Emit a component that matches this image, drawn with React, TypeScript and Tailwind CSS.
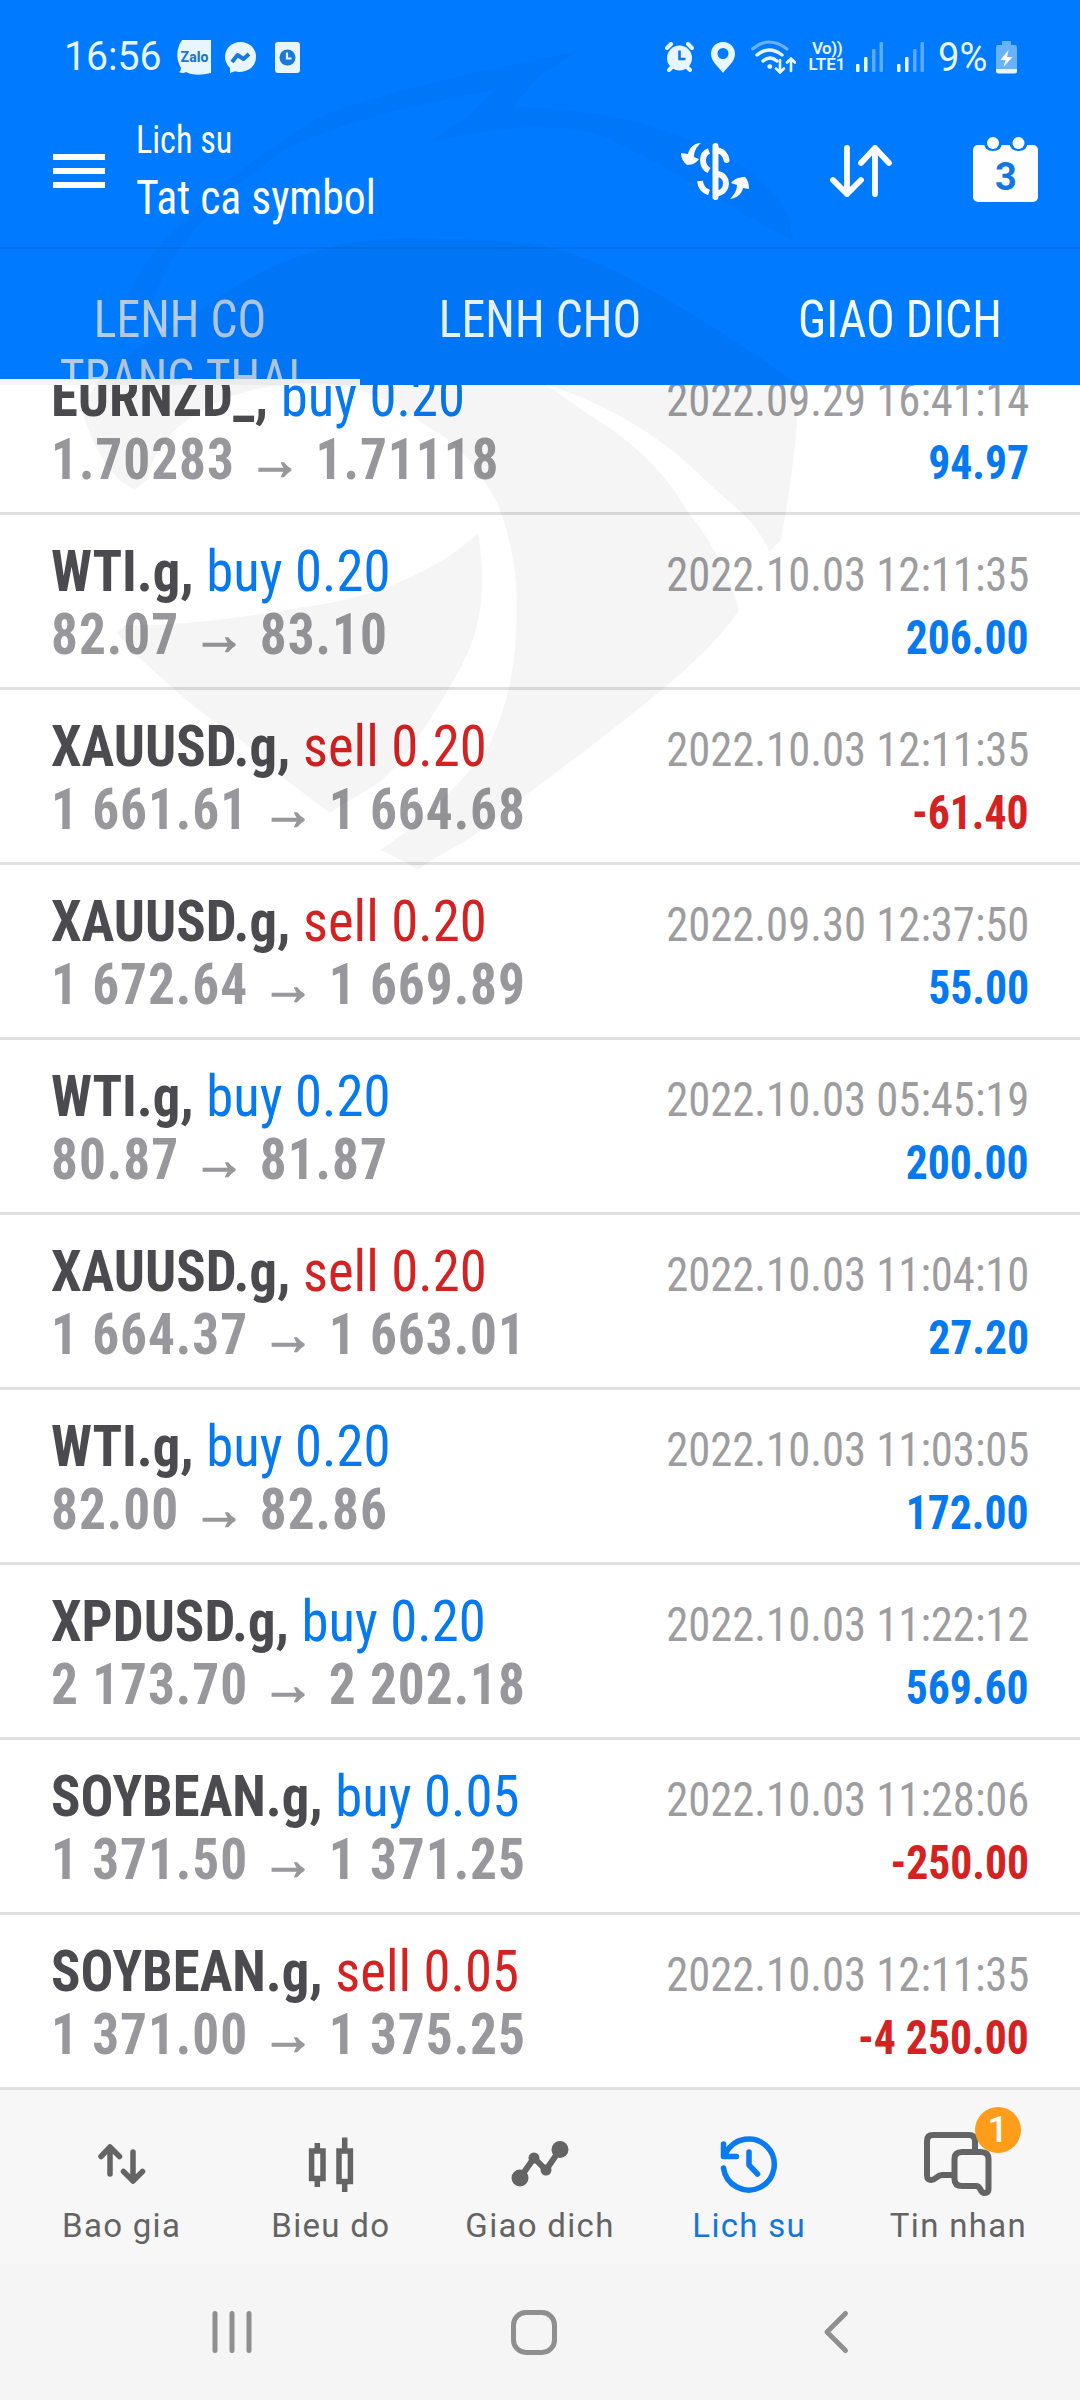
const deals = [
  { symbol: "EURNZD_", side: "buy", volume: "0.20", open: "1.70283", close: "1.71118", time: "2022.09.29 16:41:14", profit: "94.97" },
  { symbol: "WTI.g", side: "buy", volume: "0.20", open: "82.07", close: "83.10", time: "2022.10.03 12:11:35", profit: "206.00" },
  { symbol: "XAUUSD.g", side: "sell", volume: "0.20", open: "1 661.61", close: "1 664.68", time: "2022.10.03 12:11:35", profit: "-61.40" },
  { symbol: "XAUUSD.g", side: "sell", volume: "0.20", open: "1 672.64", close: "1 669.89", time: "2022.09.30 12:37:50", profit: "55.00" },
  { symbol: "WTI.g", side: "buy", volume: "0.20", open: "80.87", close: "81.87", time: "2022.10.03 05:45:19", profit: "200.00" },
  { symbol: "XAUUSD.g", side: "sell", volume: "0.20", open: "1 664.37", close: "1 663.01", time: "2022.10.03 11:04:10", profit: "27.20" },
  { symbol: "WTI.g", side: "buy", volume: "0.20", open: "82.00", close: "82.86", time: "2022.10.03 11:03:05", profit: "172.00" },
  { symbol: "XPDUSD.g", side: "buy", volume: "0.20", open: "2 173.70", close: "2 202.18", time: "2022.10.03 11:22:12", profit: "569.60" },
  { symbol: "SOYBEAN.g", side: "buy", volume: "0.05", open: "1 371.50", close: "1 371.25", time: "2022.10.03 11:28:06", profit: "-250.00" },
  { symbol: "SOYBEAN.g", side: "sell", volume: "0.05", open: "1 371.00", close: "1 375.25", time: "2022.10.03 12:11:35", profit: "-4 250.00" },
];

type Deal = (typeof deals)[number];

function Signal({ className }: { className: string }) {
  return (
    <svg className={className} width="27" height="30" viewBox="0 0 27 30" fill="#e8f6ff">
      <rect x="0" y="22" width="3.5" height="8" rx="1" />
      <rect x="8" y="15" width="3.5" height="15" rx="1" />
      <rect x="16" y="7" width="3.5" height="23" rx="1" opacity=".4" />
      <rect x="23.5" y="0" width="3.5" height="30" rx="1" opacity=".4" />
    </svg>
  );
}

function StatusBar() {
  return (
    <div className="flex h-[114px] items-center pl-[64px] pr-[64px] text-[#e8f6ff]">
      <span className="w-[113px] origin-left scale-x-[0.98] text-[40px] leading-none">16:56</span>

      {/* Zalo */}
      <svg width="34" height="35" viewBox="0 0 34 35">
        <path d="M5 0H34V33Q18 37 9 32Q6 34 2 32Q4 31 4 28Q-4 14 5 0Z" fill="#e8f6ff" />
        <text x="17.5" y="22" textAnchor="middle" fontSize="14" fontWeight="800" fontFamily="Roboto" fill="#2277cc" textLength="28">Zalo</text>
      </svg>

      {/* Messenger */}
      <svg className="ml-[14px]" width="31" height="31" viewBox="0 0 31 31">
        <path d="M15.5 0C6.5 0 0 6.5 0 15C0 19.5 2 23 5 26V31L10 29.2C20 32 31 26 31 15C31 6.5 24.5 0 15.5 0Z" fill="#e8f6ff" />
        <path d="M7 20L12.5 13L18.5 17L24 12" fill="none" stroke="#1b78d8" strokeWidth="4" strokeLinejoin="round" />
      </svg>

      <svg className="ml-[19px]" width="25" height="31" viewBox="0 0 25 31">
        <rect width="25" height="31" rx="3" fill="#e8f6ff" />
        <circle cx="12.5" cy="15.5" r="8" fill="#1b78d8" />
        <path d="M12 10.5V16.5H16.5" fill="none" stroke="#e8f6ff" strokeWidth="2.2" />
      </svg>

      <svg className="ml-auto" width="29" height="30" viewBox="0 0 29 30">
        <circle cx="14.5" cy="16" r="12.5" fill="#e8f6ff" />
        <path d="M2 6L6 2M27 6L23 2M4 28L8 24M25 28L21 24" stroke="#e8f6ff" strokeWidth="4" strokeLinecap="round" />
        <path d="M14.5 8.5V17H20.5" fill="none" stroke="#1178e6" strokeWidth="2.6" />
      </svg>
      <svg className="ml-[17px]" width="24" height="31" viewBox="0 0 24 31">
        <path d="M12 0C5 0 0 5 0 12C0 20 8 25 12 31C16 25 24 20 24 12C24 5 19 0 12 0ZM12 6A5.5 5.5 0 0 1 12 17A5.5 5.5 0 0 1 12 6Z" fill="#e8f6ff" />
      </svg>
      <svg className="ml-[16px]" width="45" height="34" viewBox="0 0 45 34" fill="none" stroke="#e8f6ff" strokeLinecap="round">
        <path d="M1.5 9Q18 -5 36 9" strokeWidth="3" opacity=".45" />
        <path d="M6 15Q18 5 31 15M12 21Q19 15 26 21" strokeWidth="3.4" />
        <path d="M18.5 26.5h.5" strokeWidth="4.5" />
        <path d="M29 20V32M25 28.5L29 32.5L33 28.5M40 31V19M36 22.5L40 18.5L44 22.5" strokeWidth="2.6" />
      </svg>
      <div className="ml-[12px] flex w-[38px] flex-col items-center text-[17px] font-semibold leading-[17px]">
        <span className="whitespace-nowrap leading-[15px] tracking-[-0.5px]">Vo))</span>
        <span>LTE1</span>
      </div>
      <Signal className="ml-[10px]" />
      <Signal className="ml-[14px]" />
      <span className="ml-[14px] w-[58px] origin-left scale-x-[0.93] text-[41px] leading-none">9%</span>
      <svg className="-mr-px" width="21" height="33" viewBox="0 0 21 33">
        <path d="M6 0H15V4H19Q21 4 21 6V28H0V6Q0 4 2 4H6Z" fill="#e8f6ff" opacity=".45" />
        <path d="M0 28H21V30Q21 32.5 18.5 32.5H2.5Q0 32.5 0 30Z" fill="#e8f6ff" />
        <path d="M12.5 9L4.5 19H9.5L7.5 26L16.5 16H11Z" fill="#fff" />
      </svg>
    </div>
  );
}

function Toolbar() {
  return (
    <div className="flex h-[135px] border-b-2 border-[#0071ec] pl-[53px] text-white">
      <div className="mt-[40px] flex w-[52px] flex-col gap-[8px]">
        <div className="h-[6px] bg-white" />
        <div className="h-[6px] bg-white" />
        <div className="h-[6px] bg-white" />
      </div>
      <div className="ml-[31px] flex w-[400px] flex-col font-['Roboto_Condensed'] [font-weight:450]">
        <span className="mt-[4px] origin-left scale-x-[0.9] text-[38px] leading-[44px]">Lich su</span>
        <span className="mt-[8px] origin-left scale-x-[0.9] text-[48.5px] leading-[56px]">Tat ca symbol</span>
      </div>

      {/* balance operations */}
      <svg className="ml-auto mt-[28px]" width="68" height="58" viewBox="0 0 68 58" fill="none" stroke="#fff" strokeWidth="6">
        <path d="M34.5 4V55" strokeLinecap="round" />
        <path d="M28 9C20 12 20 24 28 28.5M19 39Q20 48 28 50.5" />
        <path d="M37 8.500Q44 10 45.5 18" strokeLinecap="round" />
        <path d="M36 32C48 33 48 50 36 51.5" />
        <path d="M20 1C12 1 8 7 7 12L0 11C0 16 2 20 6 23C12 23 16 20 18 17L13 15C13 10 15 5 20 1Z" fill="#fff" stroke="none" />
        <path d="M49 57C57 56 61 51 62 46L68 47C68 42 67 38 64 35C58 35 53 37 50 41L56 43C56 48 53 53 49 57Z" fill="#fff" stroke="none" />
      </svg>
      <svg className="ml-[81px] mt-[30px]" width="62" height="55" viewBox="0 0 62 55" fill="none" stroke="#fff" strokeWidth="5.8" strokeLinecap="round" strokeLinejoin="round">
        <path d="M17 4V50M3 36L17 50L31 36M45 50V4M31 19L45 4L59 19" />
      </svg>
      <svg className="ml-[81px] mr-[42px] mt-[22px]" width="65" height="67" viewBox="0 0 65 67">
        <rect y="9" width="65" height="57" rx="5" fill="#fff" />
        <path d="M11 6H29Q29 15 20 15Q11 15 11 6ZM36.5 6H54.5Q54.5 15 45.5 15Q36.5 15 36.5 6Z" fill="#007aff" />
        <circle cx="20" cy="7" r="6" fill="#fff" />
        <circle cx="45.5" cy="7" r="6" fill="#fff" />
        <text x="33" y="54" textAnchor="middle" fontSize="38" fontWeight="700" fontFamily="Roboto" fill="#1377e2">3</text>
      </svg>
    </div>
  );
}

function Tabs() {
  return (
    <div className="grid h-[136px] grid-cols-3 overflow-hidden text-center font-['Roboto_Condensed'] text-[52px] leading-[59px] text-[#f0faff]">
      <div className="h-[136px] overflow-hidden border-b-[6px] border-[#f3f5f7] pt-[41px] text-[#b6cbe6]">
        <p className="scale-x-[0.92]">LENH CO<br />TRANG THAI</p>
      </div>
      <div className="pt-[41px]">
        <p className="scale-x-[0.92]">LENH CHO</p>
      </div>
      <div className="pt-[41px]">
        <p className="scale-x-[0.92]">GIAO DICH</p>
      </div>
    </div>
  );
}

function DealRow({ deal }: { deal: Deal }) {
  return (
    <div className="h-[175px] border-b-[3px] border-[#e0e0e0] pl-[51px] pr-[51px] pt-[25px]">
      <div className="flex h-[63px] items-baseline justify-between">
        <p className="origin-left scale-x-[0.96] text-[57px] leading-[63px]">
          <span className="font-bold text-[#4b4b4f]">{deal.symbol}, </span>
          <span className={deal.side === "buy" ? "text-[#0579f0]" : "text-[#d42222]"}>
            {deal.side} {deal.volume}
          </span>
        </p>
        <p className="origin-right scale-x-[0.94] text-[47.5px] leading-none text-[#9d9d9f]">{deal.time}</p>
      </div>
      <div className="flex h-[63px] items-baseline justify-between font-bold">
        <p className="origin-left scale-x-[0.936] text-[57px] leading-[63px] tracking-[1px] text-[#98989c]">
          {deal.open} <span className="[-webkit-text-stroke:1.5px]">→</span> {deal.close}
        </p>
        <p className={"origin-right scale-x-[0.9] text-[48.5px] leading-none " + (deal.profit.startsWith("-") ? "text-[#d42222]" : "text-[#0579f0]")}>
          {deal.profit}
        </p>
      </div>
    </div>
  );
}

function BottomNav() {
  return (
    <div className="grid h-[174px] grid-cols-5 bg-[#f7f7f7] px-[17px] pt-[38px] text-center text-[33px] leading-[40px] tracking-[1.3px] text-[#646464]">
      <div className="flex flex-col items-center gap-[8px]">
        <svg width="70" height="70" viewBox="0 0 70 70" fill="none" stroke="#646464" strokeWidth="5.5" strokeLinecap="round" strokeLinejoin="round">
          <path d="M23 19V46M14 28.5L23 19L32.5 28.5M46 24V53M36.5 43.5L46 53L55.5 43.5" />
        </svg>
        <span>Bao gia</span>
      </div>
      <div className="flex flex-col items-center gap-[8px]">
        <svg width="70" height="70" viewBox="0 0 70 70" fill="#fafafa" stroke="#646464" strokeWidth="5.5">
          <path d="M21.3 15V59M48.7 9.5V64" />
          <rect x="15.6" y="23" width="11.4" height="27.5" />
          <rect x="43" y="23" width="11.4" height="30.5" />
        </svg>
        <span>Bieu do</span>
      </div>
      <div className="flex flex-col items-center gap-[8px]">
        <svg width="70" height="70" viewBox="0 0 70 70" fill="#646464">
          <path d="M15 50L29 30L41 42L55 21.5" fill="none" stroke="#646464" strokeWidth="6" />
          <circle cx="15" cy="50" r="8.5" />
          <circle cx="29" cy="30" r="5.5" />
          <circle cx="41" cy="42" r="5.5" />
          <circle cx="55" cy="21.5" r="8.5" />
        </svg>
        <span>Giao dich</span>
      </div>
      <div className="flex flex-col items-center gap-[8px] text-[#1476dd]">
        <svg width="70" height="70" viewBox="0 0 70 70" fill="none" stroke="#0a7aee" strokeWidth="5.5" strokeLinecap="round" strokeLinejoin="round">
          <path d="M9.5 40A25.5 25.5 0 1 0 12 25L10 28M9.5 16V28.5H22.5M35 24V37L43.5 46" />
        </svg>
        <span>Lich su</span>
      </div>
      <div className="relative flex flex-col items-center gap-[8px]">
        <svg width="70" height="70" viewBox="0 0 70 70" fill="none" stroke="#646464" strokeWidth="6">
          <path d="M30 47H19C14 47 13 52 8.5 52C5 52 4 50 4 47V13Q4 7 10 7H46Q52 7 52 13V23" />
          <path d="M39 24H58Q65.5 24 65.5 31V61C65.5 64 64 65 61.5 65C56.5 65 58.5 58 53 58H39Q31.5 58 31.5 51V31Q31.5 24 39 24Z" />
        </svg>
        <span>Tin nhan</span>
        <div className="absolute left-[121px] top-[-21px] flex h-[46px] w-[46px] items-center justify-center rounded-full bg-[#ff9d1a] text-[36px] font-medium leading-none tracking-normal text-white">
          1
        </div>
      </div>
    </div>
  );
}

function SystemNav() {
  return (
    <div className="flex h-[136px] items-center bg-[#f5f5f5] pl-[211px]">
      <svg width="42" height="46" viewBox="0 0 42 46" stroke="#8f8f8f" strokeWidth="5" strokeLinecap="round">
        <path d="M4 4.5V41.5M21 4.5V41.5M38 4.5V41.5" />
      </svg>
      <div className="ml-[258px] h-[45px] w-[46px] rounded-[15px] border-[5px] border-[#8f8f8f]" />
      <svg className="ml-[266px]" width="28" height="46" viewBox="0 0 28 46" fill="none" stroke="#8f8f8f" strokeWidth="5" strokeLinecap="round" strokeLinejoin="round">
        <path d="M22.5 4.5L4 23L22.5 41.5" />
      </svg>
    </div>
  );
}

// faint eagle mark laid over the whole screen
function Watermark() {
  return (
    <svg className="pointer-events-none absolute left-0 top-0" width="1080" height="900" viewBox="0 0 1080 900" fill="#000" fillOpacity=".038">
      <path fillOpacity=".025" d="M577 52C500 66 370 95 320 117C270 145 150 230 127 300L120 350C130 335 148 310 155 297C170 250 215 200 284 150C340 122 420 103 495 90L467 117L430 142C500 125 560 122 605 137C680 172 740 215 793 240C790 200 760 170 697 143C640 118 580 108 513 107L540 75Z" />
      <path d="M330 247C370 236 420 238 481 240C560 242 600 262 651 290C700 318 750 350 799 385C797 450 788 500 781 540L769 552C758 522 735 508 705 480C670 445 620 408 545 384L592 417C640 445 670 480 688 512C710 540 728 570 739 610C710 655 650 700 590 747C530 792 500 815 470 838C450 850 430 860 418 870L405 862L380 850C420 825 470 775 489 745C515 690 518 640 516 583C513 550 505 520 497 503C480 470 460 445 433 430C410 415 380 390 330 384C290 380 230 390 200 412C165 432 150 460 147 480L135 490C110 478 95 450 83 415C85 385 120 355 190 317C230 290 260 265 330 247Z" />
      <path d="M478 533C486 580 484 625 461 667C435 715 405 760 379 783L345 803L330 813L286 780L241 740C215 722 190 705 172 687C150 668 130 650 117 633L125 625C180 627 260 615 303 607C370 600 440 570 478 533Z" />
    </svg>
  );
}

export default function App() {
  return (
    <div className="relative h-[2400px] w-[1080px] overflow-hidden bg-white font-[Roboto,sans-serif]">
      <header className="relative z-10 h-[385px] bg-[#007aff]">
        <StatusBar />
        <Toolbar />
        <Tabs />
      </header>
      <main className="-mt-[45px] h-[1750px] font-['Roboto_Condensed',Roboto,sans-serif]">
        {deals.map((deal, i) => (
          <DealRow key={i} deal={deal} />
        ))}
      </main>
      <BottomNav />
      <SystemNav />
      <div className="absolute left-0 top-0 z-20">
        <Watermark />
      </div>
    </div>
  );
}
